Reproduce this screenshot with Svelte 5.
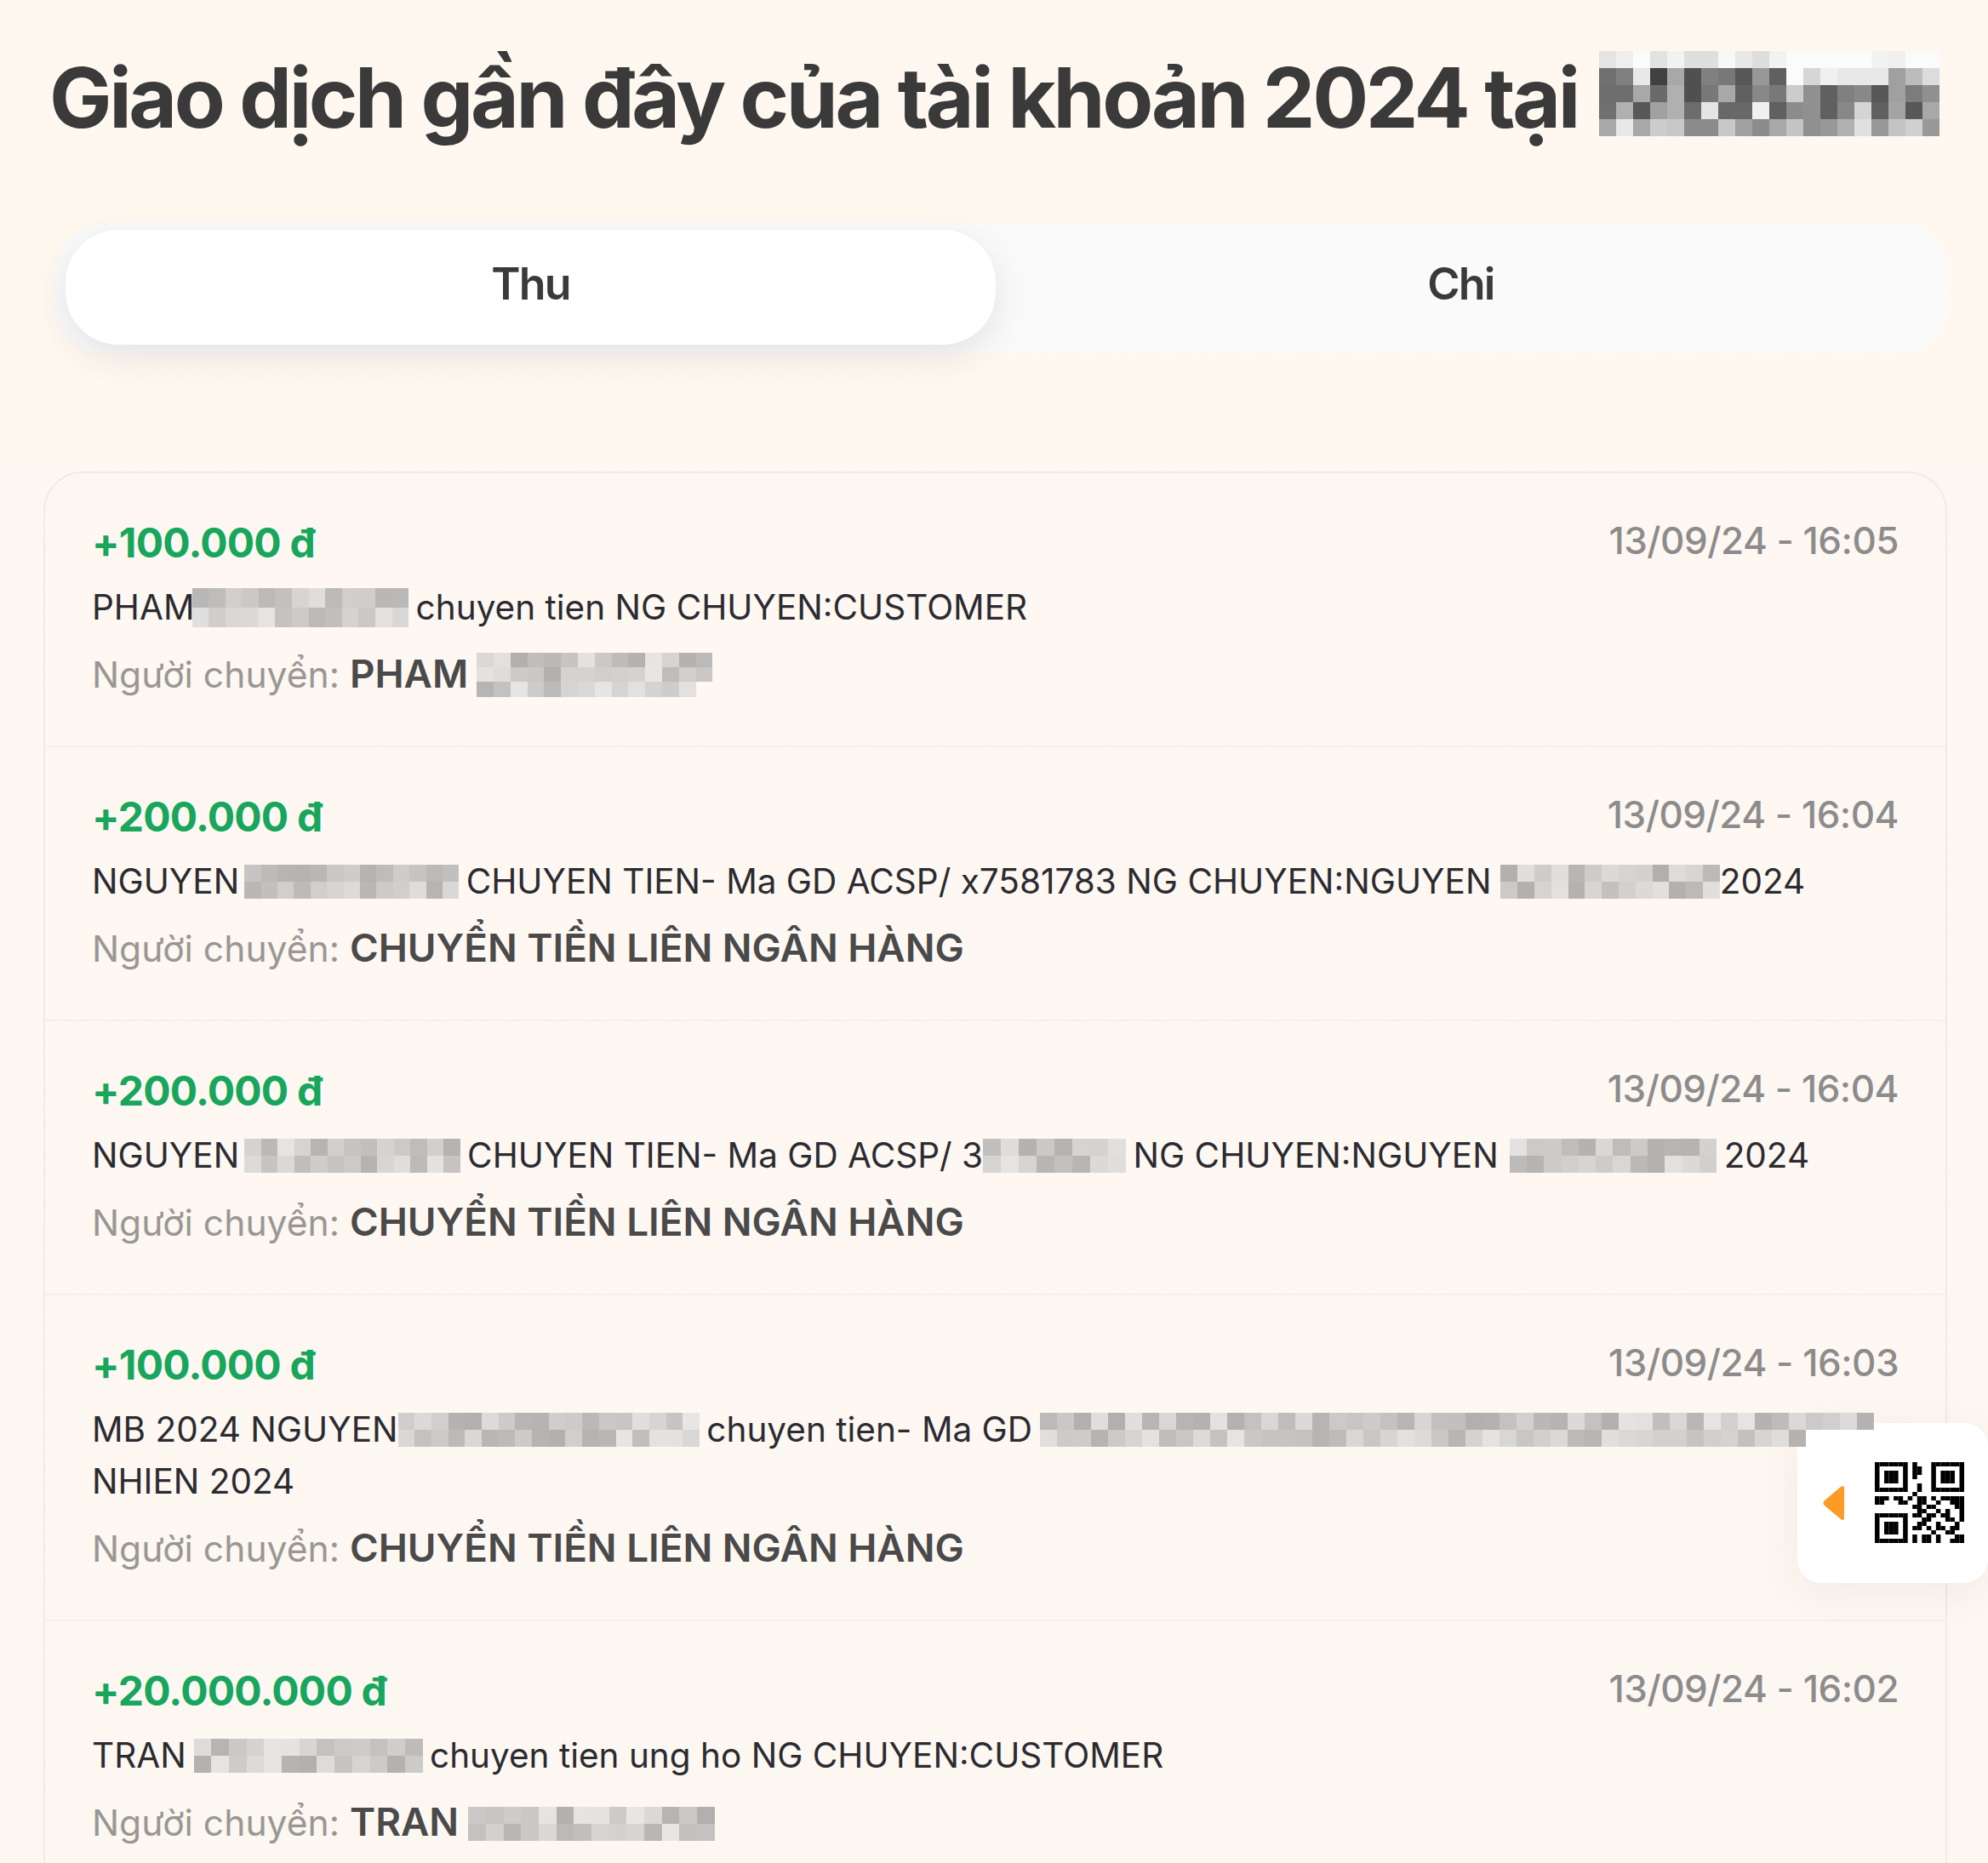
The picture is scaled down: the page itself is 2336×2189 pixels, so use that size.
<script>
  // deterministic grey noise for the redacted bits of text
  function noise(seed, cols, rows, lo, hi, lastCols) {
    let s = seed * 7919 + 13;
    const cells = [];
    for (let r = 0; r < rows; r++) {
      for (let c = 0; c < cols; c++) {
        s = (s * 16807) % 2147483647;
        const v = Math.round(lo + (s % 1000) / 1000 * (hi - lo));
        const off = lastCols && r === rows - 1 && c >= lastCols;
        cells.push(off ? "transparent" : `rgb(${v},${v - 2},${v - 4})`);
      }
    }
    return cells;
  }

  const titleGrey = [
    "e4 ee fb e2 f2 df df f8 e8 dd f2 fb fb fb fb fb f2 f0 fb fb",
    "70 80 e8 40 a8 50 80 78 58 98 60 fb d6 f0 e8 e8 e8 a0 bc dc",
    "6e 6e a8 6a b0 50 78 a8 60 88 78 cc 90 60 80 88 58 a0 7c 90",
    "70 b0 58 a0 b0 6c e4 68 68 f0 60 8c 90 60 88 d4 60 a4 58 a8",
    "a8 e8 a8 cc c8 8c 8c c8 a0 8c a8 c4 90 98 b0 e0 98 c4 d0 98"
  ].join(" ").split(" ").map(h => "#" + h + h + h);

  const qr = [
    "1111111010001111111",
    "1000001011001000001",
    "1011101011001011101",
    "1011101010001011101",
    "1011101000001011101",
    "1000001001001000001",
    "1111111001001111111",
    "0000000010000000000",
    "1110110101101011111",
    "1100011001100100111",
    "0000000011011000011",
    "0000000001100101001",
    "1111111011011011001",
    "1000001000110001101",
    "1011101001100100010",
    "1011101011010110110",
    "1011101000001001100",
    "1000001010110100011",
    "1111111010110100111"
  ];

  // a string is text, an object is a redacted block
  const rows = [
    {
      amount: "+100.000 đ", time: "13/09/24 - 16:05",
      desc: ["PHAM", { seed: 1, cols: 13, w: 19.6, h: 23, ml: -3 }, " chuyen tien NG CHUYEN:CUSTOMER"],
      sender: ["PHAM", { seed: 2, cols: 14, rows: 3, w: 19.8, h: 17.3, last: 13, ml: 10 }]
    },
    {
      amount: "+200.000 đ", time: "13/09/24 - 16:04",
      desc: ["NGUYEN", { seed: 3, cols: 13, w: 19.4, ml: 6 }, " CHUYEN TIEN- Ma GD ACSP/ x7581783 NG CHUYEN:NGUYEN", { seed: 4, cols: 13, w: 19.8, ml: 11, mr: 0 }, "2024"],
      sender: ["CHUYỂN TIỀN LIÊN NGÂN HÀNG"]
    },
    {
      amount: "+200.000 đ", time: "13/09/24 - 16:04",
      desc: ["NGUYEN", { seed: 5, cols: 13, w: 19.5, ml: 6 }, " CHUYEN TIEN- Ma GD ACSP/ 3", { seed: 6, cols: 8, w: 21 }, " NG CHUYEN:NGUYEN", { seed: 7, cols: 12, w: 20.3, ml: 13 }, " 2024"],
      sender: ["CHUYỂN TIỀN LIÊN NGÂN HÀNG"]
    },
    {
      amount: "+100.000 đ", time: "13/09/24 - 16:03",
      desc: ["MB 2024 NGUYEN", { seed: 8, cols: 18, w: 19.7 }, " chuyen tien- Ma GD", { seed: 9, cols: 49, w: 20, last: 45, ml: 9 }, "\n", "NHIEN 2024"],
      sender: ["CHUYỂN TIỀN LIÊN NGÂN HÀNG"]
    },
    {
      amount: "+20.000.000 đ", time: "13/09/24 - 16:02",
      desc: ["TRAN", { seed: 10, cols: 13, w: 20.7, ml: 9 }, " chuyen tien ung ho NG CHUYEN:CUSTOMER"],
      sender: ["TRAN", { seed: 11, cols: 14, w: 20.7, ml: 11 }]
    }
  ];
</script>

{#snippet blur(m)}
  <span
    class="mosaic"
    class:tall={m.rows === 3}
    style="grid-template-columns: repeat({m.cols}, {m.w}px); grid-auto-rows: {m.h || 20}px; margin-left: {m.ml || 0}px; margin-right: {m.mr ?? -3}px;"
  >
    {#each noise(m.seed, m.cols, m.rows || 2, 178, 232, m.last) as colour}
      <i style="background: {colour}"></i>
    {/each}
  </span>
{/snippet}

{#snippet parts(list)}
  {#each list as p}{#if p === "\n"}<br />{:else if typeof p === "string"}{p}{:else}{@render blur(p)}{/if}{/each}
{/snippet}

<div class="page">
  <h1>
    <span>Giao dịch gần đây của tài khoản 2024 tại</span>
    <span class="title-mosaic">
      {#each titleGrey as colour}
        <i style="background: {colour}"></i>
      {/each}
    </span>
  </h1>

  <div class="tabs">
    <button class="tab active">Thu</button>
    <button class="tab">Chi</button>
  </div>

  <div class="card">
    {#each rows as row}
      <div class="row">
        <div class="top">
          <span class="amount">{row.amount}</span>
          <span class="time">{row.time}</span>
        </div>
        <p class="desc">{@render parts(row.desc)}</p>
        <p class="sender">Người chuyển: <b>{@render parts(row.sender)}</b></p>
      </div>
    {/each}
  </div>

  <div class="qr-widget">
    <svg class="arrow" viewBox="0 0 27 44" width="27" height="44">
      <path d="M23 3 L4 19 Q1 22 4 25 L23 41 Q27 44 27 39 L27 5 Q27 0 23 3 Z" fill="#ff9a24" />
    </svg>
    <svg class="code" viewBox="0 0 19 19" width="105" height="95" preserveAspectRatio="none">
      {#each qr as line, y}
        {#each line.split("") as bit, x}
          {#if bit === "1"}<rect {x} {y} width="1" height="1" fill="#000" />{/if}
        {/each}
      {/each}
    </svg>
  </div>
</div>

<style>
  :global(body) {
    margin: 0;
    background: #fef7f1;
  }

  .page {
    position: relative;
    height: 2189px;
    overflow: hidden;
    box-sizing: border-box;
    padding-top: 60px;
    background: linear-gradient(180deg, #fef7f0 0, #fff8ef 300px, #fef7f2 700px, #fdf7f2 100%);
    font-family: Inter, "Noto Sans", sans-serif;
  }

  h1 {
    display: flex;
    align-items: flex-start;
    justify-content: space-between;
    box-sizing: border-box;
    width: 2221px;
    height: 100px;
    margin: 0 0 0 58px;
    font-size: 98px;
    line-height: 110px;
    font-weight: 700;
    letter-spacing: -3.4px;
    color: #3a3a3a;
    white-space: nowrap;
  }

  .title-mosaic {
    display: grid;
    grid-template-columns: repeat(20, 20px);
    grid-auto-rows: 20px;
    width: 400px;
    flex: none;
  }

  .title-mosaic i,
  .mosaic i {
    display: block;
  }

  .tabs {
    display: grid;
    grid-template-columns: 1fr 1fr;
    box-sizing: border-box;
    width: 2225px;
    height: 153px;
    margin: 102px 0 0 65px;
    padding: 8px 27px 10px 12px;
    border-radius: 60px;
    background: #fbfafa;
  }

  .tab {
    border: 0;
    padding: 0 0 8px;
    background: transparent;
    border-radius: 62px;
    font: 600 52px Inter, sans-serif;
    letter-spacing: -1.8px;
    color: #3a3a3a;
  }

  .tab.active {
    background: #fff;
    box-shadow: 0 12px 40px rgba(50, 60, 90, 0.12);
  }

  .card {
    box-sizing: border-box;
    width: 2237px;
    margin: 139px 0 0 51px;
    border: 2px solid #f0ebe7;
    border-radius: 46px;
  }

  .row {
    box-sizing: border-box;
    height: 322px;
    padding: 53px 55px 0;
    border-bottom: 2px solid #f5f0ec;
  }

  .row:has(br) {
    height: 383px;
  }

  .top {
    display: flex;
    justify-content: space-between;
    align-items: center;
    height: 56px;
  }

  .amount {
    font-size: 48px;
    font-weight: 700;
    letter-spacing: -0.8px;
    color: #17a65c;
  }

  .time {
    margin-top: -4px;
    font-size: 44px;
    font-weight: 500;
    letter-spacing: -0.5px;
    color: #8c8c8c;
  }

  p {
    margin: 0;
  }

  .desc {
    margin-top: 18px;
    font-size: 40.5px;
    line-height: 61px;
    color: #2b2b30;
  }

  .sender {
    margin-top: 17px;
    font-size: 42.6px;
    line-height: 61px;
    color: #999794;
  }

  .sender b {
    font-size: 45.8px;
    font-weight: 600;
    color: #4a4a4a;
  }

  .mosaic {
    position: relative;
    z-index: 2;
    display: inline-grid;
    margin-block: -12px;
    vertical-align: 14px;
  }

  .mosaic.tall {
    vertical-align: 24px;
  }

  .qr-widget {
    position: absolute;
    z-index: 1;
    top: 1672px;
    right: 0;
    display: flex;
    align-items: center;
    box-sizing: border-box;
    width: 224px;
    height: 188px;
    padding-left: 28px;
    gap: 36px;
    background: #fff;
    border-radius: 28px;
    box-shadow: 0 10px 50px rgba(90, 70, 50, 0.07);
  }

  .code {
    margin-top: -1px;
  }
</style>
